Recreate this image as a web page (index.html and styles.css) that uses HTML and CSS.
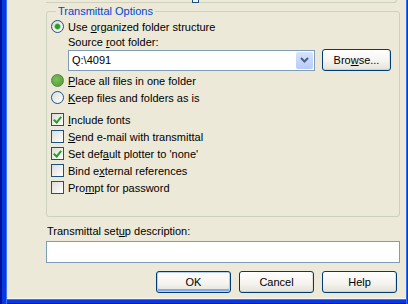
FILE: index.html
```html
<!DOCTYPE html>
<html lang="en">
<head>
    <meta charset="UTF-8">
    <title>Transmittal Setup</title>
    <link rel="stylesheet" href="styles.css">
</head>
<body>
    <div class="frame">
        <div class="client">
            <div class="prev-group"><span class="prev-check"></span></div>

            <fieldset class="group">
                <legend>Transmittal Options</legend>
                <label class="opt"><span class="radio on"></span><span>Use <u>o</u>rganized folder structure</span></label>
                <div class="sub">Source <u>r</u>oot folder:</div>
                <div class="path-row">
                    <div class="combo">
                        <span class="combo-text">Q:\4091</span>
                        <span class="combo-btn">
                            <svg width="9" height="6" viewBox="0 0 9 6"><path d="M1 1 L4.5 4.5 L8 1" fill="none" stroke="#4D6185" stroke-width="2"/></svg>
                        </span>
                    </div>
                    <button class="btn browse">Bro<u>w</u>se...</button>
                </div>
                <label class="opt first-gap"><span class="radio hot"></span><span><u>P</u>lace all files in one folder</span></label>
                <label class="opt"><span class="radio"></span><span><u>K</u>eep files and folders as is</span></label>

                <div class="checks">
                    <label class="opt"><span class="check on"></span><span><u>I</u>nclude fonts</span></label>
                    <label class="opt"><span class="check"></span><span><u>S</u>end e-mail with transmittal</span></label>
                    <label class="opt"><span class="check on"></span><span>Set def<u>a</u>ult plotter to 'none'</span></label>
                    <label class="opt"><span class="check"></span><span>Bind e<u>x</u>ternal references</span></label>
                    <label class="opt"><span class="check"></span><span>Pro<u>m</u>pt for password</span></label>
                </div>
            </fieldset>

            <div class="desc-label">Transmittal set<u>u</u>p description:</div>
            <div class="desc-box"></div>

            <div class="actions">
                <button class="btn default">OK</button>
                <button class="btn">Cancel</button>
                <button class="btn">Help</button>
            </div>
        </div>
    </div>
</body>
</html>
```

FILE: styles.css
```css
* {
    margin: 0;
    padding: 0;
    box-sizing: border-box;
}

body {
    font-family: "Liberation Sans", Arial, sans-serif;
    font-size: 11px;
    color: #000;
    background: #ECE9D8;
}

.frame {
    width: 408px;
    height: 304px;
    padding: 0 2px 5px 7px;
    background:
        linear-gradient(to right, #00109A 0 2px, #0838E0 2px 6px, #3A74F2 6px 7px) left top / 7px 100% no-repeat,
        linear-gradient(to right, #2F6CF0 0 1px, #0838E0 1px 2px) right top / 2px 100% no-repeat,
        linear-gradient(to bottom, #3A74F2 0 1px, #0838E0 1px 4px, #00109A 4px 5px) left bottom / 100% 5px no-repeat;
}

.client {
    height: 100%;
    padding: 0 6px 0 39px;
    background: #ECE9D8;
    border-bottom: 1px solid #F6F5EF;
    display: flex;
    flex-direction: column;
}

.prev-group {
    width: 351px;
    height: 3px;
    border-bottom: 1px solid #D0D0BF;
    border-right: 1px solid #D0D0BF;
    border-bottom-right-radius: 3px;
    display: flex;
}

.prev-check {
    width: 7px;
    height: 3px;
    margin-left: 146px;
    border: 1px solid #1C5180;
    border-top: none;
    background: #F2F2EC;
}

.group {
    margin-top: 2px;
    border: 1px solid #D0D0BF;
    border-radius: 3px;
    padding: 0 0 20px 4px;
    min-width: 0;
}

.group legend {
    margin-left: 5px;
    padding: 0 2px;
    color: #0046D5;
    line-height: 13px;
}

.opt {
    display: flex;
    align-items: center;
    gap: 4px;
    height: 17px;
    white-space: nowrap;
}

.first-gap {
    margin-top: 1px;
}

.radio {
    width: 13px;
    height: 13px;
    flex-shrink: 0;
    border: 1px solid #1C5180;
    border-radius: 50%;
    background: linear-gradient(135deg, #DCDCD7, #FFFFFF);
}

.radio.on {
    background:
        radial-gradient(circle, #21A121 0 2px, #55B855 2.5px, transparent 3.5px),
        linear-gradient(135deg, #DCDCD7, #FFFFFF);
}

.radio.hot {
    border-color: #5C7F4C;
    background: radial-gradient(circle at 40% 40%, #7CC05C, #4F9A30);
}

.sub {
    padding-left: 17px;
    height: 14px;
    line-height: 14px;
}

.path-row {
    display: flex;
    align-items: center;
    gap: 7px;
    height: 22px;
    margin-left: 17px;
}

.combo {
    width: 247px;
    height: 21px;
    border: 1px solid #7F9DB9;
    background: #fff;
    display: flex;
    align-items: center;
    justify-content: space-between;
    padding: 1px 1px 1px 3px;
}

.combo-btn {
    width: 17px;
    height: 100%;
    border-radius: 2px;
    background: linear-gradient(#D6E3FC, #B6CBF6);
    display: flex;
    align-items: center;
    justify-content: center;
}

.btn {
    font-family: "Liberation Sans", Arial, sans-serif;
    font-size: 11px;
    color: #000;
    width: 75px;
    height: 22px;
    border: 1px solid #003C74;
    border-radius: 3px;
    background: linear-gradient(#FFFFFF, #F5F4EF 55%, #E4E1D6);
    box-shadow: inset 0 -1px 0 #D6D0C5, inset -1px 0 0 #E2DED3;
}

.btn.browse {
    width: 69px;
}

.btn.default {
    box-shadow: inset 0 0 0 1px #B8CEF4, inset 0 -2px 0 1px #8BA8E4;
}

.checks {
    margin-top: 5px;
}

.check {
    width: 13px;
    height: 13px;
    flex-shrink: 0;
    border: 1px solid #1C5180;
    background: linear-gradient(135deg, #DCDCD7, #FFFFFF);
    position: relative;
}

.check.on::after {
    content: "";
    position: absolute;
    left: 3px;
    top: 1px;
    width: 3px;
    height: 6px;
    border: solid #21A121;
    border-width: 0 2px 2px 0;
    transform: rotate(40deg);
}

.desc-label {
    margin-top: 7px;
    padding-left: 1px;
    height: 14px;
    line-height: 14px;
}

.desc-box {
    margin-top: 3px;
    height: 22px;
    border: 1px solid #7F9DB9;
    background: #fff;
}

.actions {
    margin-top: 8px;
    margin-right: 3px;
    display: flex;
    justify-content: flex-end;
    gap: 8px;
}
```
